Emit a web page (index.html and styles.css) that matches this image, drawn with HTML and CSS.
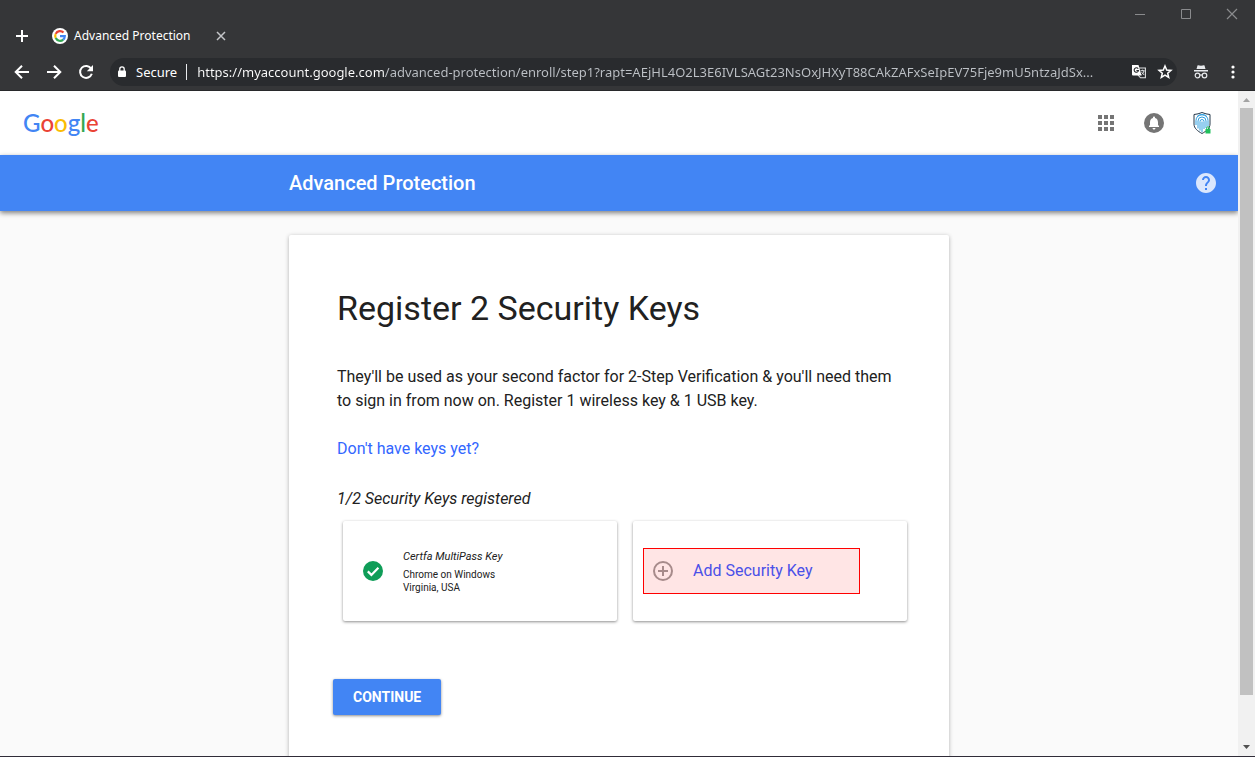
FILE: index.html
```html
<!DOCTYPE html>
<html lang="en">
<head>
<meta charset="utf-8">
<title>Advanced Protection</title>
<link rel="stylesheet" href="styles.css">
</head>
<body>
<div class="window">
  <header class="chrome">
    <div class="window-controls">
      <button class="icon-btn" aria-label="Minimize"><svg width="12" height="12" viewBox="0 0 12 12"><path d="M1 6.5h10" stroke="#8a8b8d"/></svg></button>
      <button class="icon-btn" aria-label="Maximize"><svg width="12" height="12" viewBox="0 0 12 12"><path d="M1.500 1.500h9v9h-9z" fill="none" stroke="#8a8b8d"/></svg></button>
      <button class="icon-btn" aria-label="Close"><svg width="12" height="12" viewBox="0 0 12 12"><path d="M1 1l10 10M11 1L1 11" stroke="#8a8b8d" stroke-width="1.200"/></svg></button>
    </div>
    <div class="tabs">
      <button class="icon-btn new-tab" aria-label="New tab"><svg width="14" height="14" viewBox="0 0 14 14"><path d="M7 1v12M1 7h12" stroke="#fff" stroke-width="2"/></svg></button>
      <div class="tab">
        <svg width="16" height="16" viewBox="0 0 16 16" aria-hidden="true">
          <circle cx="8" cy="8" r="8" fill="#fff"/>
          <g fill="none" stroke-width="2.200">
            <path d="M11.500 4.600A4.800 4.800 0 0 0 3.700 5.900" stroke="#ea4335"/>
            <path d="M3.700 5.900A4.800 4.800 0 0 0 3.700 10.100" stroke="#fbbc05"/>
            <path d="M3.700 10.100A4.800 4.800 0 0 0 11.200 11.600" stroke="#34a853"/>
            <path d="M11.200 11.600A4.800 4.800 0 0 0 12.800 8.200H8" stroke="#4285f4"/>
          </g>
        </svg>
        <span class="tab-title">Advanced Protection</span>
        <button class="icon-btn" aria-label="Close tab"><svg width="10" height="10" viewBox="0 0 10 10"><path d="M1 1l8 8M9 1L1 9" stroke="#c4c6c9" stroke-width="1.500"/></svg></button>
      </div>
    </div>
    <div class="toolbar">
      <nav class="nav">
        <button class="icon-btn" aria-label="Back"><svg width="16" height="16" viewBox="0 0 16 16"><path d="M15 8H2M8 1.700L1.700 8 8 14.300" fill="none" stroke="#fff" stroke-width="2"/></svg></button>
        <button class="icon-btn" aria-label="Forward"><svg width="16" height="16" viewBox="0 0 16 16"><path d="M1 8h13M8 1.700L14.300 8 8 14.300" fill="none" stroke="#fff" stroke-width="2"/></svg></button>
        <button class="icon-btn" aria-label="Reload"><svg width="16" height="16" viewBox="0 0 16 16"><path d="M13.200 4.700A6 6 0 1 0 13.800 9.800" fill="none" stroke="#fff" stroke-width="2"/><path d="M15 1v6.200H8.800z" fill="#fff"/></svg></button>
      </nav>
      <div class="omnibox">
        <svg width="12" height="14" viewBox="0 0 12 14" aria-hidden="true"><rect x="2" y="5.500" width="8" height="6.500" rx="1" fill="#fff"/><path d="M3.800 6V4a2.200 2.200 0 0 1 4.400 0v2" fill="none" stroke="#fff" stroke-width="1.300"/></svg>
        <span class="secure">Secure</span>
        <input class="url" type="text" aria-label="Address" value="https://myaccount.google.com/advanced-protection/enroll/step1?rapt=AEjHL4O2L3E6IVLSAGt23NsOxJHXyT88CAkZAFxSeIpEV75Fje9mU5ntzaJdSx...">
        <button class="icon-btn" aria-label="Translate"><svg width="16" height="16" viewBox="0 0 16 16"><path d="M6 4h8.400v9.800H9.500L7 11" fill="none" stroke="#dfe1e3" stroke-width="1.100"/><path d="M1 1h6.500l3 10.500H2a1 1 0 0 1-1-1z" fill="#fff"/><path d="M7.200 4.800A2.200 2.200 0 1 0 7.500 6.500H5.400" fill="none" stroke="#292b2e" stroke-width="1.100"/><path d="M9.500 6.700h4M11.600 5.700v1M13 6.800c-.4 2-1.400 3-2.600 4M10.600 8.200l2.600 2.800" fill="none" stroke="#dfe1e3"/></svg></button>
        <button class="icon-btn" aria-label="Bookmark"><svg width="16" height="16" viewBox="0 0 16 16"><path d="M8 2l1.700 4 4.300.4-3.300 2.800 1 4.300L8 11.200l-3.700 2.300 1-4.300L2 6.400 6.300 6z" fill="none" stroke="#fff" stroke-width="1.500"/></svg></button>
      </div>
      <button class="icon-btn" aria-label="Incognito"><svg width="16" height="16" viewBox="0 0 16 16"><path d="M4.500 1.500c1-.5 2 .3 3.500.3s2.500-.8 3.500-.3L12.500 5h-9zM1 6h14v1.500H1z" fill="#e8eaed"/><g fill="none" stroke="#e8eaed" stroke-width="1.200"><circle cx="4.500" cy="11.500" r="2.300"/><circle cx="11.500" cy="11.500" r="2.300"/><path d="M6.800 11.200q1.200-.8 2.400 0"/></g></svg></button>
      <button class="icon-btn" aria-label="Menu"><svg width="16" height="16" viewBox="0 0 16 16" fill="#fff"><circle cx="8" cy="3" r="1.600"/><circle cx="8" cy="8" r="1.600"/><circle cx="8" cy="13" r="1.600"/></svg></button>
    </div>
  </header>

  <div class="viewport">
    <div class="page">
      <div class="topbar">
        <a class="logo" href="#" aria-label="Google"><span class="blue">G</span><span class="red">o</span><span class="yellow">o</span><span class="blue">g</span><span class="green">l</span><span class="red">e</span></a>
        <div class="topbar-actions">
          <button class="icon-btn" aria-label="Apps"><svg width="24" height="24" viewBox="0 0 24 24" fill="#757575"><path d="M4 4h4v4H4zM10 4h4v4h-4zM16 4h4v4h-4zM4 10h4v4H4zM10 10h4v4h-4zM16 10h4v4h-4zM4 16h4v4H4zM10 16h4v4h-4zM16 16h4v4h-4z"/></svg></button>
          <button class="icon-btn" aria-label="Notifications"><svg width="24" height="24" viewBox="0 0 24 24"><circle cx="12" cy="12" r="10" fill="#757575"/><path d="M12 18.500c.83 0 1.500-.67 1.500-1.500h-3c0 .83.67 1.500 1.500 1.500zM17 16H7v-1l1-1v-2.610C8 9.270 9.030 7.470 11 7v-.5c0-.57.430-1 1-1s1 .430 1 1V7c1.970.470 3 2.280 3 4.390V14l1 1z" fill="#fff"/></svg></button>
          <button class="icon-btn" aria-label="Account"><svg width="24" height="24" viewBox="0 0 24 24" fill="none"><path d="M4 3.500q4-.3 8-2 4 1.700 8 2V13c0 4.300-3.500 7-8 9.500-4.500-2.500-8-5.200-8-9.500z" fill="#fff" stroke="#25384b"/><g stroke="#2f9fe0"><path d="M6 14V9.500a6 6 0 0 1 12 0V15M8 17.500V10a4 4 0 0 1 8 0v7M10 19.500V10.500a2 2 0 0 1 4 0V18M12 21V10.500M7 5.500q5-3.500 10 0"/></g><path d="M15.500 18h5v4.500h-5z" fill="#20c05c"/><path d="M16.700 18v-1a1.300 1.300 0 0 1 2.600 0v1" stroke="#20c05c"/></svg></button>
        </div>
      </div>
      <div class="banner">
        <h2 class="banner-title">Advanced Protection</h2>
        <button class="icon-btn help" aria-label="Help"><svg width="24" height="24" viewBox="0 0 24 24" fill="#dbe7fd"><path d="M12 2C6.480 2 2 6.480 2 12s4.480 10 10 10 10-4.480 10-10S17.520 2 12 2zm1 17h-2v-2h2v2zm2.070-7.750l-.9.920C13.450 12.900 13 13.500 13 15h-2v-.5c0-1.100.450-2.100 1.170-2.830l1.240-1.260c.370-.360.590-.860.590-1.410 0-1.100-.9-2-2-2s-2 .9-2 2H8c0-2.210 1.790-4 4-4s4 1.790 4 4c0 .880-.360 1.680-.930 2.250z"/></svg></button>
      </div>
      <main class="card">
        <h1 class="title">Register 2 Security Keys</h1>
        <p class="text">They'll be used as your second factor for 2-Step Verification &amp; you'll need them to sign in from now on. Register 1 wireless key &amp; 1 USB key.</p>
        <p class="text"><a class="link" href="#">Don't have keys yet?</a></p>
        <p class="count">1/2 Security Keys registered</p>
        <div class="keys">
          <section class="key">
            <svg width="24" height="24" viewBox="0 0 24 24" aria-hidden="true"><circle cx="12" cy="12" r="10" fill="#0f9d58"/><path d="M6.800 12.400l3.600 3.500 7-7.200" fill="none" stroke="#fff" stroke-width="2.200"/></svg>
            <div class="key-info">
              <div class="key-name">Certfa MultiPass Key</div>
              <div>Chrome on Windows</div>
              <div>Virginia, USA</div>
            </div>
          </section>
          <section class="key key-add">
            <button class="add">
              <svg width="24" height="24" viewBox="0 0 24 24" aria-hidden="true"><g fill="none" stroke="#a78b8b" stroke-width="2"><circle cx="12" cy="12" r="9"/><path d="M12 7v10M7 12h10"/></g></svg>
              <span>Add Security Key</span>
            </button>
          </section>
        </div>
        <button class="continue">CONTINUE</button>
      </main>
    </div>
    <div class="scrollbar" aria-hidden="true">
      <svg width="17" height="17" viewBox="0 0 17 17"><path d="M5 11l3.500-4 3.500 4z" fill="#a3a3a3"/></svg>
      <div class="track"><div class="thumb"></div></div>
      <svg width="17" height="17" viewBox="0 0 17 17"><path d="M5 6l3.500 4L12 6z" fill="#505050"/></svg>
    </div>
  </div>
</div>
</body>
</html>
```

FILE: styles.css
```css
* { box-sizing: border-box; }

body {
  margin: 0;
  font-family: Roboto, "Liberation Sans", sans-serif;
  color: #212121;
}

h1, h2, p { margin: 0; }
svg { display: block; flex: none; }

.window {
  display: flex;
  flex-direction: column;
  height: 100vh;
  overflow: hidden;
  border-bottom: 1px solid #302c38;
}

.icon-btn {
  display: flex;
  flex: none;
  padding: 0;
  border: 0;
  background: none;
}

/* Browser chrome */
.chrome {
  flex: none;
  background: #353638;
  border-bottom: 1px solid #28292b;
  font-family: "Noto Sans", "Open Sans", sans-serif;
  color: #fff;
}

.window-controls {
  display: flex;
  justify-content: flex-end;
  gap: 34px;
  padding: 8px 17px 0;
}

.tabs {
  display: flex;
  align-items: center;
  gap: 23px;
  height: 32px;
  padding: 0 15px;
}

.tab {
  display: flex;
  align-items: center;
  gap: 6px;
  width: 174px;
}

.tab-title {
  flex: 1;
  font-size: 12px;
  line-height: 16px;
  white-space: nowrap;
}

.toolbar {
  display: flex;
  align-items: center;
  gap: 16px;
  padding: 6px 14px 4px;
}

.nav {
  display: flex;
  gap: 16px;
}

.omnibox {
  display: flex;
  flex: 1;
  align-items: center;
  gap: 10px;
  height: 28px;
  min-width: 0;
  padding: 0 4px 0 6px;
  border-radius: 14px;
  background: #292b2e;
}

.secure {
  margin-left: -2px;
  padding-right: 9px;
  border-right: 1px solid #e8eaed;
  font-size: 13px;
  line-height: 16px;
}

.url {
  flex: 1;
  min-width: 0;
  padding: 0;
  border: 0;
  outline: 0;
  font: 13px/20px "Noto Sans", "Open Sans", sans-serif;
  color: transparent;
  background: linear-gradient(90deg, #fff 188px, #bdc1c6 188px);
  background-clip: text;
  -webkit-background-clip: text;
}

/* Page */
.viewport {
  display: flex;
  flex: 1;
  min-height: 0;
}

.page {
  flex: 1;
  min-width: 0;
  overflow: hidden;
  background: #fafafa;
}

.topbar {
  display: flex;
  align-items: center;
  justify-content: space-between;
  height: 64px;
  padding: 0 24px 0 23px;
  background: #fff;
}

.logo {
  font-family: "Lato Medium", Lato, sans-serif;
  font-size: 24px;
  font-weight: 500;
  line-height: 32px;
  text-decoration: none;
}

.blue { color: #4285f4; }
.red { color: #ea4335; }
.yellow { color: #fbbc05; }
.green { color: #34a853; }

.topbar-actions {
  display: flex;
  gap: 24px;
}

.banner {
  display: grid;
  grid-template-columns: 1fr 660px 1fr;
  align-items: center;
  height: 56px;
  background: #4285f4;
  box-shadow: 0 2px 5px rgba(0, 0, 0, 0.5);
}

.banner-title {
  grid-column: 2;
  font-size: 20px;
  font-weight: 500;
  line-height: 24px;
  color: #fff;
}

.help {
  justify-self: end;
  margin-right: 20px;
}

.card {
  max-width: 660px;
  min-height: 600px;
  margin: 24px auto 0;
  padding: 48px 42px 48px 48px;
  border-radius: 2px;
  background: #fff;
  box-shadow: 0 1px 4px rgba(0, 0, 0, 0.3);
}

.title {
  margin-bottom: 32px;
  font-size: 34px;
  font-weight: 400;
  line-height: 50px;
}

.text {
  margin-bottom: 24px;
  font-size: 16px;
  line-height: 24px;
}

.link {
  color: #3367ff;
  text-decoration: none;
}

.count {
  margin-top: 26px;
  font-size: 16px;
  font-style: italic;
  line-height: 24px;
}

.keys {
  display: grid;
  grid-template-columns: 1fr 1fr;
  gap: 16px;
  margin: 10px 0 58px 6px;
}

.key {
  display: flex;
  align-items: center;
  gap: 18px;
  height: 100px;
  padding-left: 18px;
  border-radius: 2px;
  background: #fff;
  box-shadow: 0 1px 3px rgba(0, 0, 0, 0.45);
}

.key-info {
  font-size: 10px;
  line-height: 13px;
}

.key-name {
  margin-bottom: 3px;
  font-size: 11px;
  font-style: italic;
  line-height: 16px;
}

.key-add { padding-left: 10px; }

.add {
  display: flex;
  align-items: center;
  gap: 18px;
  width: 217px;
  height: 46px;
  padding: 0 7px;
  border: 1px solid #f00;
  background: #ffe5e5;
  font: 16px/24px Roboto, "Liberation Sans", sans-serif;
  color: #4a50e8;
}

.continue {
  height: 36px;
  margin-left: -4px;
  padding: 0 20px;
  border: 0;
  border-radius: 2px;
  background: #4285f4;
  box-shadow: 0 1px 3px rgba(0, 0, 0, 0.45);
  font: 700 14px/20px Roboto, "Liberation Sans", sans-serif;
  color: #fff;
}

.scrollbar {
  display: flex;
  flex: none;
  flex-direction: column;
  width: 17px;
  background: #f1f1f1;
}

.track {
  flex: 1;
  padding: 0 2px;
}

.thumb {
  height: 93%;
  background: #c1c1c1;
}
```
